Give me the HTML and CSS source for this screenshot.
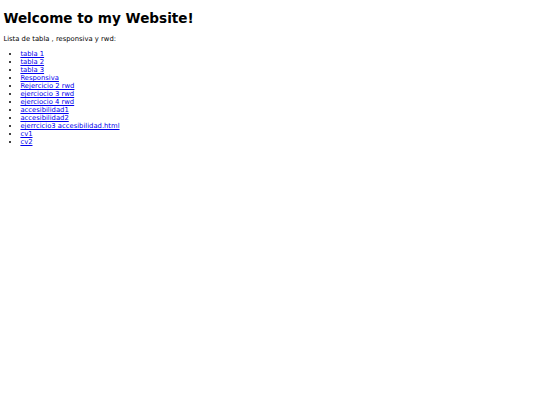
FILE: index.html
```html
<!DOCTYPE html>
<html>
<head>
<meta charset="utf-8">
<link rel="stylesheet" href="styles.css">
</head>
<body class="page">
<h1 class="title">Welcome to my Website!</h1>
<p class="intro">Lista de tabla , responsiva y rwd:</p>
<ul class="links">
<li><a href="#">tabla 1</a></li>
<li><a href="#">tabla 2</a></li>
<li><a href="#">tabla 3</a></li>
<li><a href="#">Responsiva</a></li>
<li><a href="#">Rejercicio 2 rwd</a></li>
<li><a href="#">ejerciocio 3 rwd</a></li>
<li><a href="#">ejerciocio 4 rwd</a></li>
<li><a href="#">accesibilidad1</a></li>
<li><a href="#">accesibilidad2</a></li>
<li><a href="#">ejerrcicio3 accesibilidad.html</a></li>
<li><a href="#">cv1</a></li>
<li><a href="#">cv2</a></li>
</ul>
</body>
</html>
```
FILE: styles.css
```css
.page {
  margin: 3.4px;
  font-family: "DejaVu Sans", sans-serif;
  font-size: 6.8px;
  color: #000;
  background: #fff;
}
.title {
  font-size: 13.6px;
  margin: 6.4px 0 9.1px;
  font-weight: bold;
}
.intro {
  margin: 6.8px 0;
}
.links {
  margin: 7.6px 0 6.8px;
  padding-left: 17px;
}
.links a {
  color: #0000ee;
}
```
